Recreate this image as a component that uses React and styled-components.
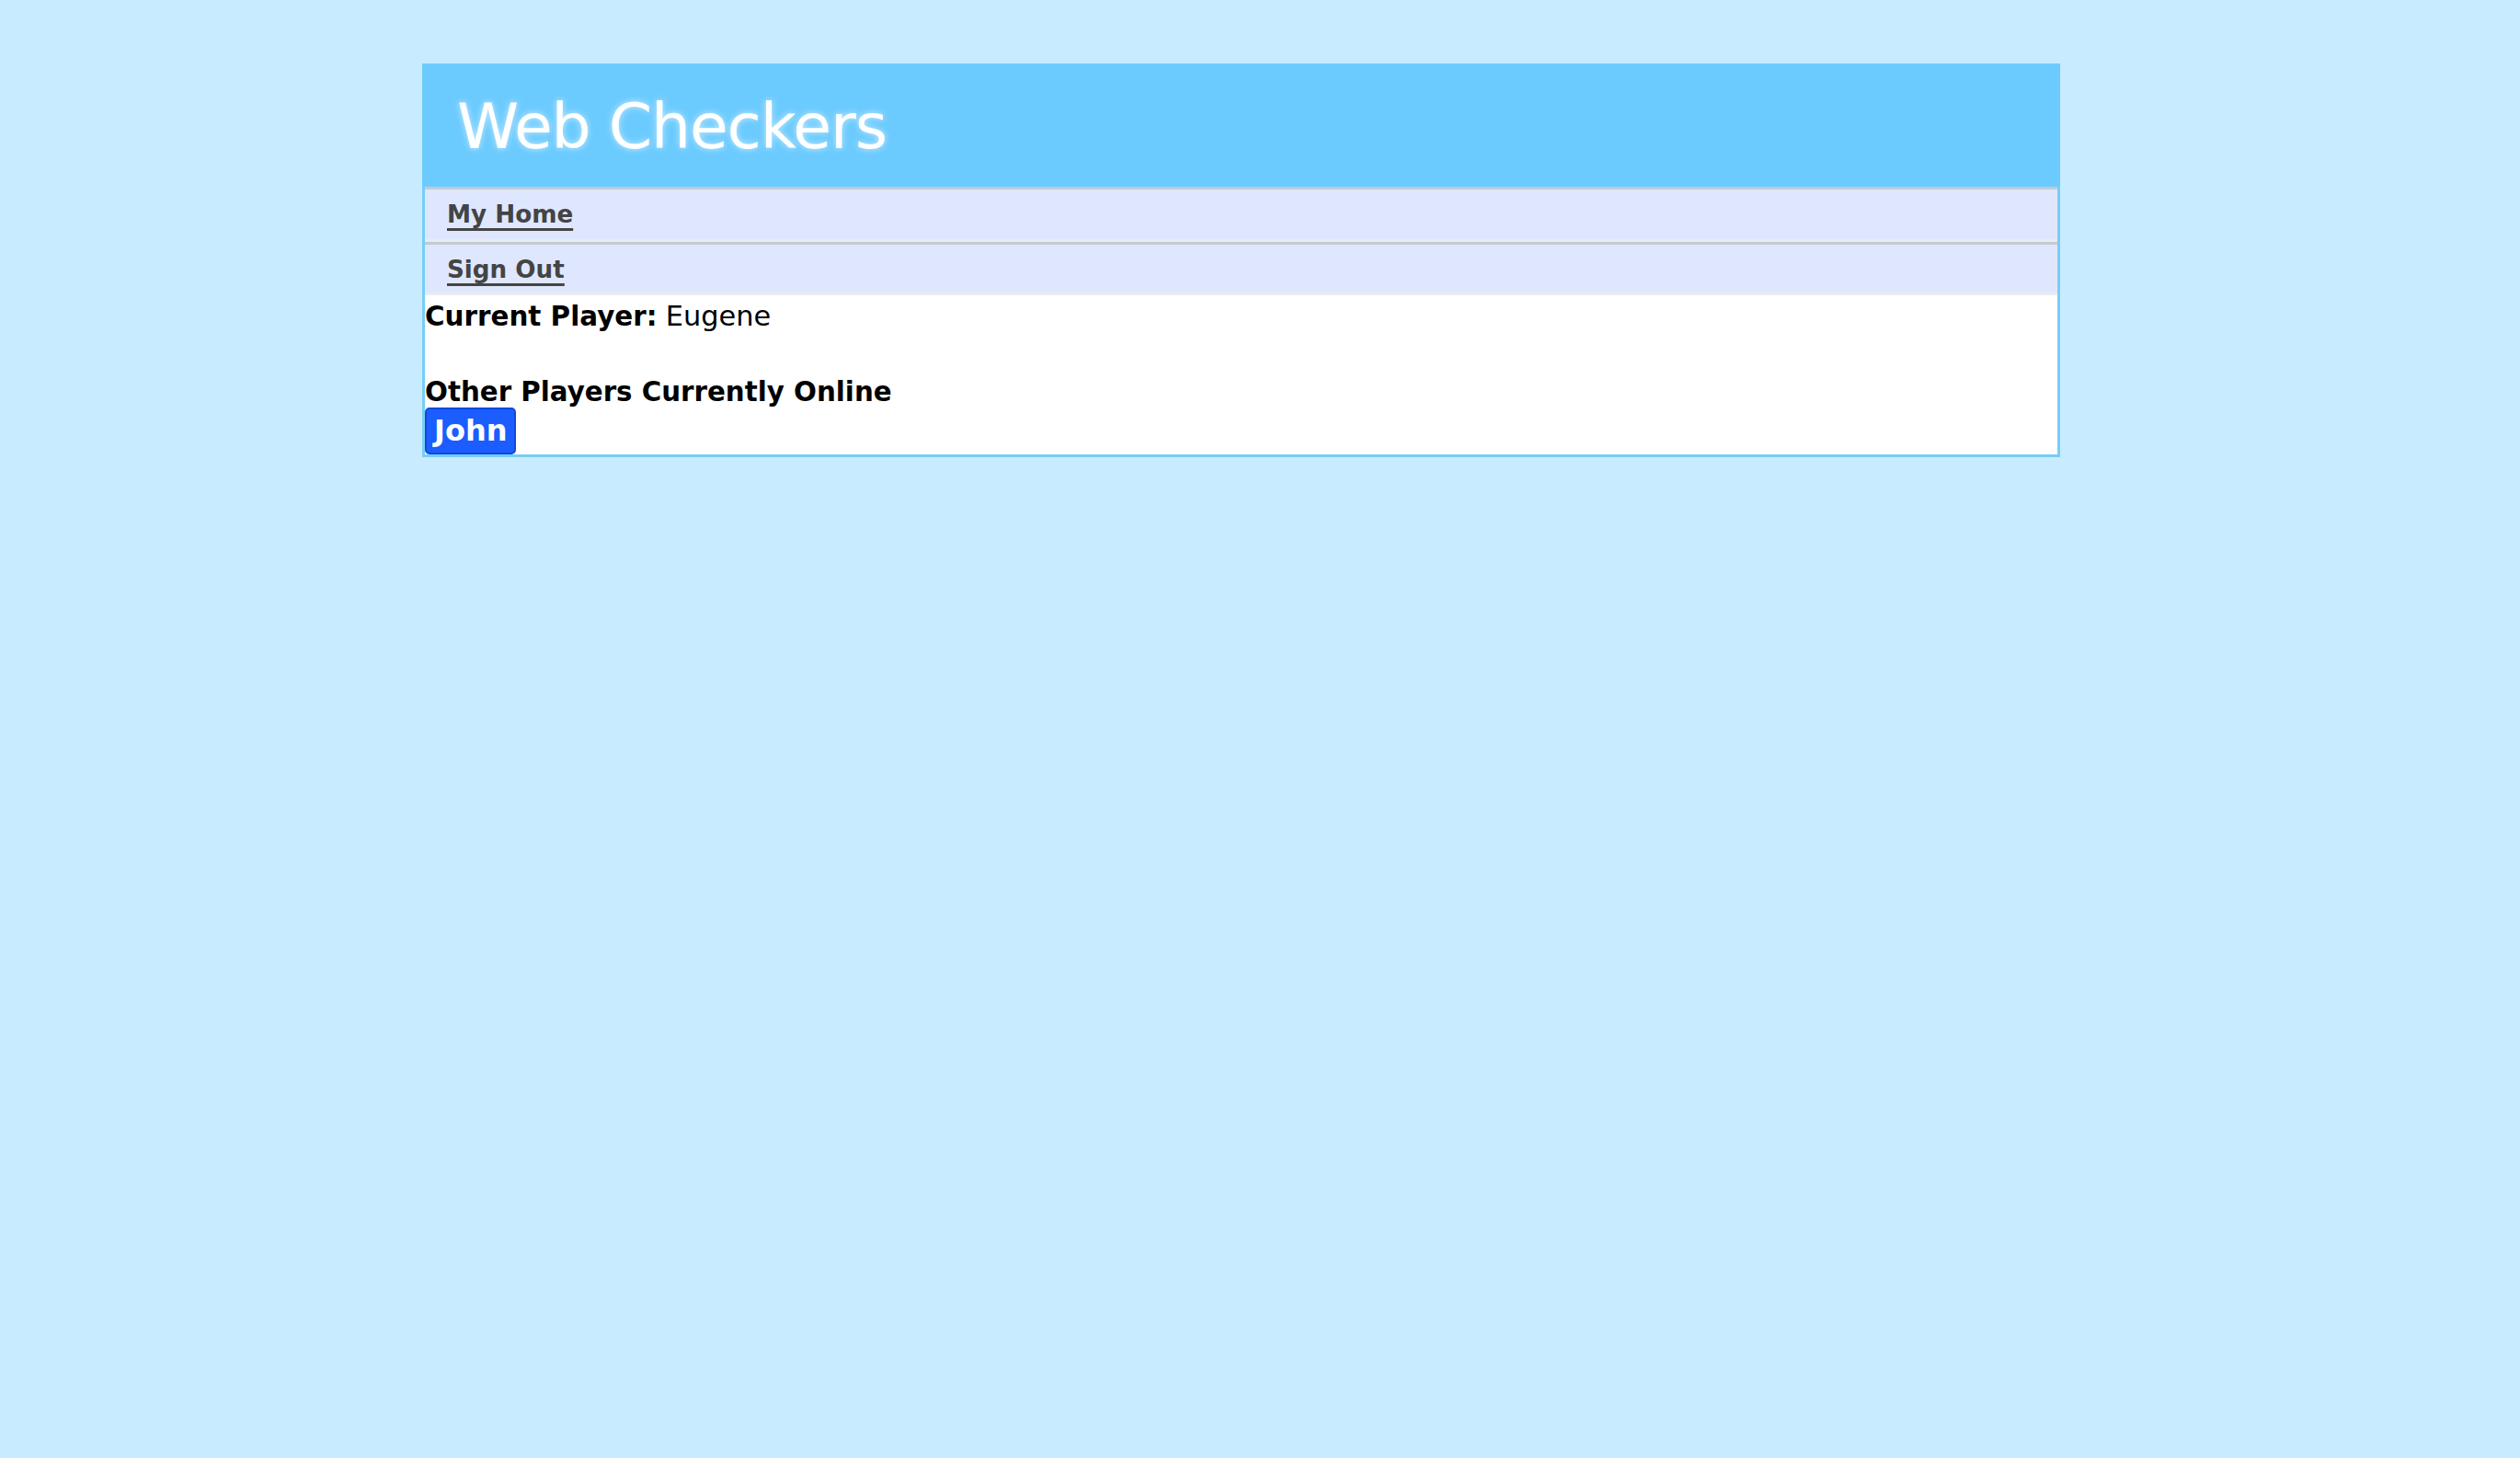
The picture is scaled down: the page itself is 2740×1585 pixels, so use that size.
import React from "react";
import styled, { createGlobalStyle } from "styled-components";

const GlobalStyle = createGlobalStyle`
  html, body {
    margin: 0;
    padding: 0;
    background: #c9ebff;
    font-family: "DejaVu Sans", Tahoma, Verdana, sans-serif;
  }
`;

const Page = styled.div`
  width: 1781px;
  margin: 69px 0 0 459px;
`;

const Header = styled.header`
  box-sizing: border-box;
  height: 134px;
  padding: 29px 0 0 38px;
  background: #6ccbfe;
`;

const Title = styled.h1`
  margin: 0;
  font-size: 68px;
  font-weight: normal;
  letter-spacing: -1.25px;
  line-height: 79px;
  color: #ffffff;
  text-shadow: 0 0 7px rgba(255, 255, 255, 0.65);
`;

const Body = styled.div`
  border: 3px solid #78cdf6;
  border-top: none;
  background: #ffffff;
`;

const Nav = styled.nav`
  display: flex;
  flex-direction: column;
`;

const NavItem = styled.div`
  height: 30px;
  padding: ${(p) => (p.$first ? "12px 24px 12px" : "12px 24px 10px")};
  background: #dfe7fe;
  border-top: 3px solid #c3cad3;
  border-bottom: 3px solid #e8ebf0;
  line-height: 30px;
`;

const NavLink = styled.a`
  font-size: 26.2px;
  font-weight: bold;
  color: #444444;
  text-decoration: underline;
  text-decoration-thickness: 3px;
  text-underline-offset: 6px;
  cursor: pointer;
`;

const Content = styled.main`
  padding-top: 5px;
  display: flex;
  flex-direction: column;
  align-items: flex-start;
`;

const PlayerLine = styled.div`
  font-size: 29.4px;
  color: #000000;
`;

const Label = styled.span`
  font-weight: bold;
`;

const Name = styled.span`
  font-size: 30.4px;
`;

const Heading = styled.h2`
  margin: 48px 0 0;
  font-size: 29.3px;
  font-weight: bold;
  color: #000000;
`;

const PlayerButton = styled.button`
  font-family: "DejaVu Sans", Tahoma, Verdana, sans-serif;
  font-size: 32px;
  font-weight: bold;
  color: #ffffff;
  background: #1b5dfe;
  border: 2px solid #1049dc;
  border-radius: 5px;
  padding: 5px 8px;
  line-height: 37px;
  cursor: pointer;
`;

export default function App() {
  return (
    <>
      <GlobalStyle />
      <Page>
        <Header>
          <Title>Web Checkers</Title>
        </Header>
        <Body>
          <Nav>
            <NavItem $first>
              <NavLink>My Home</NavLink>
            </NavItem>
            <NavItem>
              <NavLink>Sign Out</NavLink>
            </NavItem>
          </Nav>
          <Content>
            <PlayerLine>
              <Label>Current Player:</Label> <Name>Eugene</Name>
            </PlayerLine>
            <Heading>Other Players Currently Online</Heading>
            <PlayerButton>John</PlayerButton>
          </Content>
        </Body>
      </Page>
    </>
  );
}
